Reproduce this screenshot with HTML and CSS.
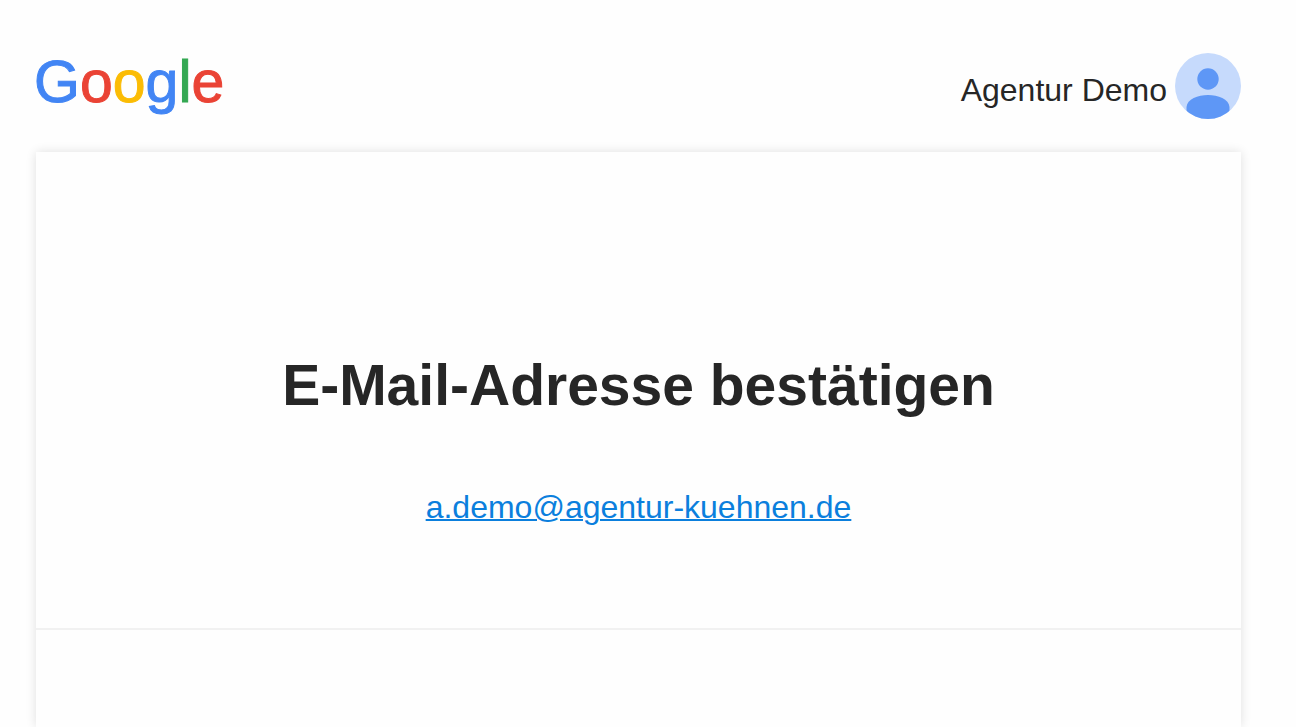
FILE: index.html
```html
<!DOCTYPE html>
<html lang="de">
<head>
<meta charset="utf-8">
<meta name="viewport" content="width=device-width, initial-scale=1">
<title>E-Mail-Adresse bestätigen</title>
<link rel="stylesheet" href="styles.css">
</head>
<body>
<div class="page">
  <header class="header">
    <svg class="logo" viewBox="0 0 190 66" role="img" aria-label="Google">
      <text class="wordmark" x="-2" y="49"><tspan class="blue">G</tspan><tspan class="red">o</tspan><tspan class="yellow">o</tspan><tspan class="blue">g</tspan><tspan class="green">l</tspan><tspan class="red">e</tspan></text>
    </svg>
    <div class="account">
      <span class="name">Agentur Demo</span>
      <svg class="avatar" viewBox="0 0 66 66" aria-hidden="true">
        <defs><clipPath id="disc"><circle cx="33" cy="33" r="33"/></clipPath></defs>
        <circle cx="33" cy="33" r="33" fill="#c6dafc"/>
        <g clip-path="url(#disc)" fill="#5e97f6">
          <circle cx="33" cy="26" r="10.7"/>
          <path d="M11.500 66V54C12 46 23 42 33 42S54 46 54.500 54V66Z"/>
        </g>
      </svg>
    </div>
  </header>
  <main class="card">
    <section class="intro">
      <h1 class="title">E-Mail-Adresse bestätigen</h1>
      <a class="email" href="mailto:a.demo@agentur-kuehnen.de">a.demo@agentur-kuehnen.de</a>
    </section>
    <section class="details"></section>
  </main>
</div>
</body>
</html>
```
FILE: styles.css
```css
* {
  box-sizing: border-box;
}

body {
  margin: 0;
  background: #fefefe;
  color: #262626;
  font-family: "Liberation Sans", Arial, sans-serif;
}

.page {
  display: flex;
  flex-direction: column;
  min-height: 100vh;
  padding: 53px 55px 0 36px;
}

.header {
  display: flex;
  align-items: flex-start;
  justify-content: space-between;
  padding-bottom: 33px;
}

.logo {
  width: 190px;
  height: 66px;
  overflow: visible;
}

.wordmark {
  font-family: "Liberation Sans", Arial, sans-serif;
  font-size: 59px;
  stroke-width: 1px;
}

.blue { fill: #4285f4; stroke: #4285f4; }
.red { fill: #ea4335; stroke: #ea4335; }
.yellow { fill: #fbbc05; stroke: #fbbc05; }
.green { fill: #34a853; stroke: #34a853; }

.account {
  display: flex;
  align-items: center;
  gap: 8px;
}

.name {
  padding-top: 8px;
  font-size: 32px;
  line-height: 36px;
}

.avatar {
  width: 66px;
  height: 66px;
}

.card {
  display: flex;
  flex: 1;
  flex-direction: column;
  background: #fefefe;
  box-shadow: 0 0 10px rgba(0, 0, 0, 0.12);
}

.intro {
  display: flex;
  flex-direction: column;
  align-items: center;
  padding: 200px 20px 103px;
  border-bottom: 2px solid #f1f1f1;
}

.title {
  margin: 0 0 71px;
  font-size: 57px;
  line-height: 66px;
  text-align: center;
}

.email {
  color: #0b7fdd;
  font-size: 32px;
  line-height: 36px;
  text-decoration-thickness: 2px;
}

.details {
  min-height: 96px;
}
```
